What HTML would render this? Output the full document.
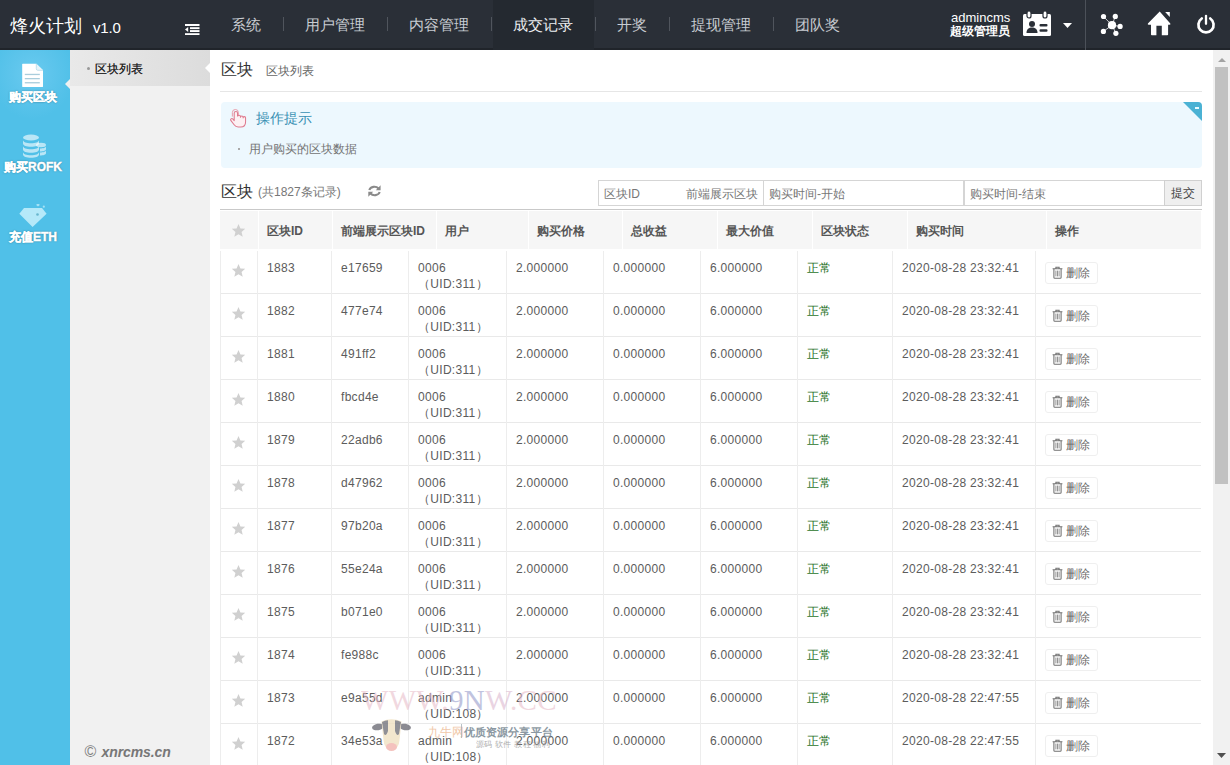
<!DOCTYPE html>
<html><head><meta charset="utf-8">
<style>
*{margin:0;padding:0;box-sizing:border-box}
html,body{width:1230px;height:765px;overflow:hidden;background:#fff;font-family:"Liberation Sans",sans-serif;}
.abs{position:absolute}
#top{position:absolute;left:0;top:0;width:1230px;height:50px;background:#2a2f37;}
#logo{position:absolute;left:10px;top:14.5px;color:#fff;font-size:18px;line-height:22px;white-space:nowrap}
#logo .v{font-size:15px;margin-left:11px;position:relative;top:1px;letter-spacing:-0.2px}
.nav{position:absolute;top:15px;color:#c8ccd2;font-size:15px;line-height:20px;white-space:nowrap}
.sep{position:absolute;top:17px;width:1px;height:14px;background:#50555d}
#act{position:absolute;left:493px;top:0;width:101px;height:50px;background:#242930}
#side1{position:absolute;left:0;top:50px;width:70px;height:715px;background:radial-gradient(ellipse 42px 45px at 32px 24px,#6acbef 0%,#5ec5ec 45%,#50c0e8 100%)}
.s1t{position:absolute;left:-2px;width:70px;text-align:center;color:#fff;font-size:12px;font-weight:bold;line-height:14px;-webkit-text-stroke:0.4px #fff;text-shadow:0 0 2px rgba(0,0,0,.5)}
#side2{position:absolute;left:70px;top:50px;width:140px;height:715px;background:#f1f1f1}
#s2act{position:absolute;left:0;top:0;width:140px;height:35.5px;background:linear-gradient(90deg,#e9e9e9,#dcdcdc)}
#main{position:absolute;left:210px;top:50px;width:1003px;height:715px;background:#fff}
.t16{font-size:16px;color:#333;line-height:20px;white-space:nowrap}
.t12{font-size:12px;color:#666;line-height:16px;white-space:nowrap}
#hr{position:absolute;left:220px;top:91px;width:982px;height:1px;background:#e6e6e6}
#tip{position:absolute;left:221px;top:102px;width:981px;height:66px;background:#edf8fe;border-radius:4px;overflow:hidden}
#tipc{position:absolute;right:0;top:0;width:0;height:0;border-top:19px solid #4bb2d4;border-left:19px solid transparent}
.inp{position:absolute;top:179.5px;height:26.5px;border:1px solid #d5d5d5;background:#fff;font-size:12px;color:#777;line-height:26px;padding-left:5px;white-space:nowrap;overflow:hidden}
#btn{position:absolute;left:1164px;top:180px;width:38px;height:26px;border:1px solid #d0d0d0;background:#efefef;font-size:12px;color:#444;line-height:24px;text-align:center}
#tbl{position:absolute;left:220px;top:208px;width:981px;height:557px;}
#tline{position:absolute;left:220px;top:209px;width:982px;height:1px;background:#c9c9c9}
.thead{position:absolute;left:0;top:3px;width:981px;height:38px;background:#f6f6f6}
.hc{position:absolute;top:0;height:38px;line-height:40px;padding-left:8px;font-size:12px;font-weight:bold;color:#555;border-left:1px solid #fff;white-space:nowrap}
.hc.c0{border-left:none;padding-left:11px;padding-top:0}
.hc.c0 svg{vertical-align:middle;margin-top:-3px}
.tbody{position:absolute;left:0;top:43px;width:981px;height:520px}
.row{position:absolute;left:0;width:981px;height:43px;border-bottom:1px solid #e9e9e9}
.bc{position:absolute;top:0;height:43px;padding:9px 0 0 9px;letter-spacing:0.3px;font-size:12px;color:#5c5c5c;line-height:16px;border-left:1px solid #ededed;white-space:nowrap}
.bc.c0{border-left:1px solid #ededed;padding:12px 0 0 10px}
.uid{display:inline-block;margin-left:0px}
.ok{color:#2a742a;letter-spacing:0}
.del{position:absolute;left:9px;top:11px;letter-spacing:0;width:53px;height:22px;border:1px solid #efefef;border-radius:3px;font-size:12px;color:#6a6a6a;line-height:20px;padding-left:6px}
.del svg{vertical-align:middle;margin-top:-2px;margin-right:3px}
#sb{position:absolute;left:1213px;top:50px;width:17px;height:715px;background:#f1f1f1}
#thumb{position:absolute;left:2px;top:17px;width:13px;height:417px;background:#c1c1c1}
</style></head><body>
<div id="top">
  <div class="abs" style="left:0;top:48px;width:1230px;height:2px;background:#20242a"></div>
  <div id="logo">烽火计划<span class="v">v1.0</span></div>
  <svg class="abs" style="left:185px;top:24px" width="15" height="11" viewBox="0 0 15 11"><rect x="0" y="0" width="14.5" height="2" fill="#fff"/><rect x="5" y="3.2" width="9.5" height="1.9" fill="#fff"/><rect x="5" y="6.1" width="9.5" height="1.9" fill="#fff"/><rect x="0" y="9.2" width="14.5" height="1.9" fill="#fff"/><path d="M0 5.5l3.2-2.6v5.2z" fill="#fff"/></svg>
  <div id="act"></div>
  <div class="nav" style="left:231px">系统</div><div class="sep" style="left:283px"></div>
  <div class="nav" style="left:305px">用户管理</div><div class="sep" style="left:387px"></div>
  <div class="nav" style="left:409px">内容管理</div><div class="sep" style="left:491px"></div>
  <div class="nav" style="left:513px;color:#eceef0">成交记录</div><div class="sep" style="left:595px"></div>
  <div class="nav" style="left:617px">开奖</div><div class="sep" style="left:669px"></div>
  <div class="nav" style="left:691px">提现管理</div><div class="sep" style="left:773px"></div>
  <div class="nav" style="left:795px">团队奖</div>
  <div class="abs" style="left:951px;top:10px;color:#fff;font-size:13px;line-height:15px">admincms</div>
  <div class="abs" style="left:950px;top:23px;color:#fff;font-size:12px;font-weight:bold;line-height:16px">超级管理员</div>
  <svg class="abs" style="left:1022px;top:10px" width="30" height="27" viewBox="0 0 30 27">
    <rect x="1" y="4" width="28" height="22" rx="1.5" fill="#fff"/>
    <rect x="5" y="1" width="4" height="7" rx="2" fill="#fff" stroke="#2a2f37" stroke-width="1.2"/>
    <rect x="21" y="1" width="4" height="7" rx="2" fill="#fff" stroke="#2a2f37" stroke-width="1.2"/>
    <circle cx="10" cy="14" r="3" fill="#2a2f37"/>
    <path d="M4.5 23c0-4 2.5-5.5 5.5-5.5s5.5 1.5 5.5 5.5z" fill="#2a2f37"/>
    <rect x="17.5" y="14" width="8" height="2.4" rx="1" fill="#2a2f37"/>
    <rect x="17.5" y="19.3" width="8" height="2.4" rx="1" fill="#2a2f37"/>
  </svg>
  <svg class="abs" style="left:1063px;top:23px" width="9" height="5" viewBox="0 0 9 5"><path d="M0 0h9L4.5 5z" fill="#fff"/></svg>
  <div class="abs" style="left:1085px;top:0;width:1px;height:50px;background:#4c5159"></div>
  <svg class="abs" style="left:1095px;top:8px" width="32" height="32" viewBox="0 0 32 32">
    <g stroke="#fff" stroke-width="0.9" opacity="0.85"><line x1="17" y1="17.2" x2="8.5" y2="8.5"/><line x1="17" y1="17.2" x2="20.3" y2="8.4"/><line x1="17" y1="17.2" x2="25.1" y2="18.4"/><line x1="17" y1="17.2" x2="8.4" y2="23.4"/><line x1="17" y1="17.2" x2="20.9" y2="25.3"/></g>
    <g fill="#fff"><circle cx="17" cy="17.2" r="4.1"/><circle cx="8.5" cy="8.5" r="2.6"/><circle cx="20.3" cy="8.4" r="2.6"/><circle cx="25.1" cy="18.4" r="2.6"/><circle cx="8.4" cy="23.4" r="2.6"/><circle cx="20.9" cy="25.3" r="2.6"/></g>
  </svg>
  <svg class="abs" style="left:1143px;top:6px" width="32" height="32" viewBox="0 0 32 32">
    <path d="M16.7 5.6L4.9 17.4Q4.3 18.8 5.8 18.8H8V28.5Q8 29.3 8.8 29.3H13.4V19.7H18.8V29.3H24.3Q25.1 29.3 25.1 28.5V18.8H26.4Q27.9 18.8 27.3 17.4Z" fill="#fff"/>
    <path d="M22.2 5.9H26.8V11.1z" fill="#fff"/>
  </svg>
  <svg class="abs" style="left:1195px;top:13px" width="23" height="23" viewBox="0 0 23 23">
    <path d="M6.75 5.5A7.6 7.6 0 1 0 15.25 5.5" fill="none" stroke="#fff" stroke-width="2.7" stroke-linecap="round"/>
    <line x1="11" y1="2.85" x2="11" y2="10.85" stroke="#fff" stroke-width="2.3" stroke-linecap="round"/>
  </svg>
</div>

<div id="side1">
  <svg class="abs" style="left:22px;top:13px" width="22" height="25" viewBox="0 0 22 25"><path d="M0.2 1.2Q0.2 0.8 0.6 0.8H14.3L21 7.3V23.6Q21 24 20.6 24H0.6Q0.2 24 0.2 23.6z" fill="#fff"/><path d="M14.3 0.8V5.8Q14.3 7.3 15.8 7.3H21" fill="#e6f5fb" stroke="#b5d9e8" stroke-width="0.8"/><g fill="#a9cddc"><rect x="2.8" y="10.8" width="15" height="1.3"/><rect x="2.8" y="15" width="15" height="1.3"/><rect x="2.8" y="19.1" width="15" height="1.3"/></g></svg>
  <div class="s1t" style="top:39.5px">购买区块</div>
  <svg class="abs" style="left:65px;top:29px" width="5" height="10" viewBox="0 0 5 10"><path d="M5 0v10L0 5z" fill="#f0f0f0"/></svg>
  <svg class="abs" style="left:22px;top:84px" width="25" height="24" viewBox="0 0 25 24" fill="rgba(255,255,255,.6)"><ellipse cx="9" cy="3.5" rx="8" ry="3"/><path d="M1 6c0 2 3.5 3.3 8 3.3s8-1.3 8-3.3v3.5c0 2-3.5 3.3-8 3.3S1 11.5 1 9.5z"/><path d="M1 12c0 2 3.5 3.3 8 3.3s8-1.3 8-3.3v3.5c0 2-3.5 3.3-8 3.3S1 17.5 1 15.5z"/><path d="M1 18c0 2 3.5 3.3 8 3.3s8-1.3 8-3.3v2.5c0 2-3.5 3.3-8 3.3S1 22.5 1 20.5z"/><ellipse cx="19" cy="11" rx="5" ry="2.2"/><path d="M18 14.5c3 0 6-.8 6-2.2v3c0 1.5-3 2.2-6 2.2zM18 18.5c3 0 6-.8 6-2.2v3c0 1.5-3 2.2-6 2.2z"/></svg>
  <div class="s1t" style="top:110px">购买ROFK</div>
  <svg class="abs" style="left:19px;top:154px" width="28" height="25" viewBox="0 0 28 25"><path d="M5 4h18l4.6 5.8L13.6 23 0.3 9.8z" fill="rgba(220,248,255,.72)"/><circle cx="19" cy="0.8" r="1.5" fill="rgba(220,248,255,.6)"/><circle cx="24.8" cy="2.7" r="1.1" fill="rgba(220,248,255,.6)"/><circle cx="18.5" cy="10.5" r="1.3" fill="rgba(40,140,170,.55)"/></svg>
  <div class="s1t" style="top:180px">充值ETH</div>
</div>

<div id="side2">
  <div id="s2act"></div>
  <div class="abs" style="left:17px;top:17px;width:3px;height:3px;border-radius:50%;background:#999"></div>
  <div class="abs" style="left:25px;top:10.5px;font-size:12px;color:#262626;line-height:16px;text-shadow:0 0 0.4px #444">区块列表</div>
  <svg class="abs" style="left:135px;top:13px" width="5" height="10" viewBox="0 0 5 10"><path d="M5 0v10L0 5z" fill="#fff"/></svg>
  <div class="abs" style="left:14.5px;top:693.5px;font-size:16px;color:#808080;line-height:16px;white-space:nowrap">©</div><div class="abs" style="left:31.5px;top:694px;font-size:14px;color:#777;font-style:italic;font-weight:bold;line-height:16px;letter-spacing:-0.1px;white-space:nowrap">xnrcms.cn</div>
</div>

<div id="main"></div>
<div class="abs t16" style="left:221px;top:60px">区块</div>
<div class="abs t12" style="left:266px;top:63px">区块列表</div>
<div id="hr"></div>
<div id="tip"><div id="tipc"></div>
  <div class="abs" style="left:974px;top:5px;width:4px;height:1.5px;background:#e8fbff"></div>
</div>
<svg class="abs" style="left:223px;top:102.5px" width="30" height="30" viewBox="0 0 30 30"><g transform="translate(13.5 14.5) scale(.88) translate(-13.5 -14.5)"><path d="M8.8 13.5V8.8A3.4 3.4 0 0 1 15.6 8.8V12" fill="none" stroke="#e89aa8" stroke-width="1.1"/><path d="M14.8 13.5a1.6 1.6 0 0 1 3.2 0v.8a1.5 1.5 0 0 1 3 0v.6a1.4 1.4 0 0 1 2.8 0V19.5c0 3.5-2 5.7-5.5 5.7h-3c-2 0-3.3-.8-4.5-2.5L7 17.8a1.4 1.4 0 0 1 2.2-1.7L10.9 18V9.5a1.9 1.9 0 0 1 3.8 0v4" fill="#fdf0f3" stroke="#de7a8e" stroke-width="1.2" stroke-linejoin="round"/></g></svg>
<div class="abs" style="left:256px;top:109px;font-size:14px;color:#3990b3;line-height:18px">操作提示</div>
<div class="abs" style="left:238px;top:148px;width:2px;height:2px;background:#aaa"></div>
<div class="abs t12" style="left:249px;top:141px;color:#737373">用户购买的区块数据</div>

<div class="abs t16" style="left:221px;top:182px">区块</div>
<div class="abs t12" style="left:258px;top:184px;color:#777">(共1827条记录)</div>
<svg class="abs" style="left:368px;top:185px" width="13" height="12" viewBox="0 0 13 12"><path d="M1.3 5A5.3 4.6 0 0 1 10.5 3.5M11.7 7A5.3 4.6 0 0 1 2.5 8.5" fill="none" stroke="#8a8a8a" stroke-width="2.1"/><path d="M12.6 0.3V5.2H7.8z M0.3 11.7V6.8H5.2z" fill="#8a8a8a"/></svg>

<div class="inp" style="left:598px;width:166px">区块ID<span style="position:absolute;left:87px">前端展示区块ID</span><span style="position:absolute;left:159px;top:0;width:7px;height:24px;background:#fff"></span></div>
<div class="inp" style="left:763px;width:201px">购买时间-开始</div>
<div class="inp" style="left:964px;width:201px">购买时间-结束</div>
<div id="btn">提交</div>

<div id="tline"></div>
<div id="tbl">
<div class="thead"><div class="hc c0" style="left:0px;width:38px"><svg width="15" height="15" viewBox="0 0 24 24"><path d="M12 1.5l3.1 7.1 7.6.7-5.8 5 1.8 7.5L12 17.9l-6.7 3.9 1.8-7.5-5.8-5 7.6-.7z" fill="#d0d0d0"/></svg></div><div class="hc" style="left:38px;width:74px">区块ID</div><div class="hc" style="left:112px;width:104px">前端展示区块ID</div><div class="hc" style="left:216px;width:92px">用户</div><div class="hc" style="left:308px;width:94px">购买价格</div><div class="hc" style="left:402px;width:95px">总收益</div><div class="hc" style="left:497px;width:95px">最大价值</div><div class="hc" style="left:592px;width:95px">区块状态</div><div class="hc" style="left:687px;width:139px">购买时间</div><div class="hc" style="left:826px;width:155px">操作</div></div>
<div class="tbody"><div class="row" style="top:0px"><div class="bc c0" style="left:0px;width:37px"><svg width="15" height="15" viewBox="0 0 24 24"><path d="M12 1.5l3.1 7.1 7.6.7-5.8 5 1.8 7.5L12 17.9l-6.7 3.9 1.8-7.5-5.8-5 7.6-.7z" fill="#d0d0d0"/></svg></div><div class="bc" style="left:37px;width:74px">1883</div><div class="bc" style="left:111px;width:77px">e17659</div><div class="bc" style="left:188px;width:98px">0006<br><span class="uid">（UID:311）</span></div><div class="bc" style="left:286px;width:97px">2.000000</div><div class="bc" style="left:383px;width:97px">0.000000</div><div class="bc" style="left:480px;width:97px">6.000000</div><div class="bc" style="left:577px;width:95px"><span class="ok">正常</span></div><div class="bc" style="left:672px;width:143px">2020-08-28 23:32:41</div><div class="bc" style="left:815px;width:166px"><span class="del"><svg width="11" height="13" viewBox="0 0 11 13"><path d="M0.6 2.8h9.8M3.9 2.8V1.3h3.2v1.5M1.9 2.8v8.6q0 .9.9.9h5.4q.9 0 .9-.9V2.8" fill="none" stroke="#707070" stroke-width="1.05"/><path d="M3.9 4.6v5.8M5.5 4.6v5.8M7.1 4.6v5.8" stroke="#707070" stroke-width="0.75"/></svg><span class="dt">删除</span></span></div></div><div class="row" style="top:43px"><div class="bc c0" style="left:0px;width:37px"><svg width="15" height="15" viewBox="0 0 24 24"><path d="M12 1.5l3.1 7.1 7.6.7-5.8 5 1.8 7.5L12 17.9l-6.7 3.9 1.8-7.5-5.8-5 7.6-.7z" fill="#d0d0d0"/></svg></div><div class="bc" style="left:37px;width:74px">1882</div><div class="bc" style="left:111px;width:77px">477e74</div><div class="bc" style="left:188px;width:98px">0006<br><span class="uid">（UID:311）</span></div><div class="bc" style="left:286px;width:97px">2.000000</div><div class="bc" style="left:383px;width:97px">0.000000</div><div class="bc" style="left:480px;width:97px">6.000000</div><div class="bc" style="left:577px;width:95px"><span class="ok">正常</span></div><div class="bc" style="left:672px;width:143px">2020-08-28 23:32:41</div><div class="bc" style="left:815px;width:166px"><span class="del"><svg width="11" height="13" viewBox="0 0 11 13"><path d="M0.6 2.8h9.8M3.9 2.8V1.3h3.2v1.5M1.9 2.8v8.6q0 .9.9.9h5.4q.9 0 .9-.9V2.8" fill="none" stroke="#707070" stroke-width="1.05"/><path d="M3.9 4.6v5.8M5.5 4.6v5.8M7.1 4.6v5.8" stroke="#707070" stroke-width="0.75"/></svg><span class="dt">删除</span></span></div></div><div class="row" style="top:86px"><div class="bc c0" style="left:0px;width:37px"><svg width="15" height="15" viewBox="0 0 24 24"><path d="M12 1.5l3.1 7.1 7.6.7-5.8 5 1.8 7.5L12 17.9l-6.7 3.9 1.8-7.5-5.8-5 7.6-.7z" fill="#d0d0d0"/></svg></div><div class="bc" style="left:37px;width:74px">1881</div><div class="bc" style="left:111px;width:77px">491ff2</div><div class="bc" style="left:188px;width:98px">0006<br><span class="uid">（UID:311）</span></div><div class="bc" style="left:286px;width:97px">2.000000</div><div class="bc" style="left:383px;width:97px">0.000000</div><div class="bc" style="left:480px;width:97px">6.000000</div><div class="bc" style="left:577px;width:95px"><span class="ok">正常</span></div><div class="bc" style="left:672px;width:143px">2020-08-28 23:32:41</div><div class="bc" style="left:815px;width:166px"><span class="del"><svg width="11" height="13" viewBox="0 0 11 13"><path d="M0.6 2.8h9.8M3.9 2.8V1.3h3.2v1.5M1.9 2.8v8.6q0 .9.9.9h5.4q.9 0 .9-.9V2.8" fill="none" stroke="#707070" stroke-width="1.05"/><path d="M3.9 4.6v5.8M5.5 4.6v5.8M7.1 4.6v5.8" stroke="#707070" stroke-width="0.75"/></svg><span class="dt">删除</span></span></div></div><div class="row" style="top:129px"><div class="bc c0" style="left:0px;width:37px"><svg width="15" height="15" viewBox="0 0 24 24"><path d="M12 1.5l3.1 7.1 7.6.7-5.8 5 1.8 7.5L12 17.9l-6.7 3.9 1.8-7.5-5.8-5 7.6-.7z" fill="#d0d0d0"/></svg></div><div class="bc" style="left:37px;width:74px">1880</div><div class="bc" style="left:111px;width:77px">fbcd4e</div><div class="bc" style="left:188px;width:98px">0006<br><span class="uid">（UID:311）</span></div><div class="bc" style="left:286px;width:97px">2.000000</div><div class="bc" style="left:383px;width:97px">0.000000</div><div class="bc" style="left:480px;width:97px">6.000000</div><div class="bc" style="left:577px;width:95px"><span class="ok">正常</span></div><div class="bc" style="left:672px;width:143px">2020-08-28 23:32:41</div><div class="bc" style="left:815px;width:166px"><span class="del"><svg width="11" height="13" viewBox="0 0 11 13"><path d="M0.6 2.8h9.8M3.9 2.8V1.3h3.2v1.5M1.9 2.8v8.6q0 .9.9.9h5.4q.9 0 .9-.9V2.8" fill="none" stroke="#707070" stroke-width="1.05"/><path d="M3.9 4.6v5.8M5.5 4.6v5.8M7.1 4.6v5.8" stroke="#707070" stroke-width="0.75"/></svg><span class="dt">删除</span></span></div></div><div class="row" style="top:172px"><div class="bc c0" style="left:0px;width:37px"><svg width="15" height="15" viewBox="0 0 24 24"><path d="M12 1.5l3.1 7.1 7.6.7-5.8 5 1.8 7.5L12 17.9l-6.7 3.9 1.8-7.5-5.8-5 7.6-.7z" fill="#d0d0d0"/></svg></div><div class="bc" style="left:37px;width:74px">1879</div><div class="bc" style="left:111px;width:77px">22adb6</div><div class="bc" style="left:188px;width:98px">0006<br><span class="uid">（UID:311）</span></div><div class="bc" style="left:286px;width:97px">2.000000</div><div class="bc" style="left:383px;width:97px">0.000000</div><div class="bc" style="left:480px;width:97px">6.000000</div><div class="bc" style="left:577px;width:95px"><span class="ok">正常</span></div><div class="bc" style="left:672px;width:143px">2020-08-28 23:32:41</div><div class="bc" style="left:815px;width:166px"><span class="del"><svg width="11" height="13" viewBox="0 0 11 13"><path d="M0.6 2.8h9.8M3.9 2.8V1.3h3.2v1.5M1.9 2.8v8.6q0 .9.9.9h5.4q.9 0 .9-.9V2.8" fill="none" stroke="#707070" stroke-width="1.05"/><path d="M3.9 4.6v5.8M5.5 4.6v5.8M7.1 4.6v5.8" stroke="#707070" stroke-width="0.75"/></svg><span class="dt">删除</span></span></div></div><div class="row" style="top:215px"><div class="bc c0" style="left:0px;width:37px"><svg width="15" height="15" viewBox="0 0 24 24"><path d="M12 1.5l3.1 7.1 7.6.7-5.8 5 1.8 7.5L12 17.9l-6.7 3.9 1.8-7.5-5.8-5 7.6-.7z" fill="#d0d0d0"/></svg></div><div class="bc" style="left:37px;width:74px">1878</div><div class="bc" style="left:111px;width:77px">d47962</div><div class="bc" style="left:188px;width:98px">0006<br><span class="uid">（UID:311）</span></div><div class="bc" style="left:286px;width:97px">2.000000</div><div class="bc" style="left:383px;width:97px">0.000000</div><div class="bc" style="left:480px;width:97px">6.000000</div><div class="bc" style="left:577px;width:95px"><span class="ok">正常</span></div><div class="bc" style="left:672px;width:143px">2020-08-28 23:32:41</div><div class="bc" style="left:815px;width:166px"><span class="del"><svg width="11" height="13" viewBox="0 0 11 13"><path d="M0.6 2.8h9.8M3.9 2.8V1.3h3.2v1.5M1.9 2.8v8.6q0 .9.9.9h5.4q.9 0 .9-.9V2.8" fill="none" stroke="#707070" stroke-width="1.05"/><path d="M3.9 4.6v5.8M5.5 4.6v5.8M7.1 4.6v5.8" stroke="#707070" stroke-width="0.75"/></svg><span class="dt">删除</span></span></div></div><div class="row" style="top:258px"><div class="bc c0" style="left:0px;width:37px"><svg width="15" height="15" viewBox="0 0 24 24"><path d="M12 1.5l3.1 7.1 7.6.7-5.8 5 1.8 7.5L12 17.9l-6.7 3.9 1.8-7.5-5.8-5 7.6-.7z" fill="#d0d0d0"/></svg></div><div class="bc" style="left:37px;width:74px">1877</div><div class="bc" style="left:111px;width:77px">97b20a</div><div class="bc" style="left:188px;width:98px">0006<br><span class="uid">（UID:311）</span></div><div class="bc" style="left:286px;width:97px">2.000000</div><div class="bc" style="left:383px;width:97px">0.000000</div><div class="bc" style="left:480px;width:97px">6.000000</div><div class="bc" style="left:577px;width:95px"><span class="ok">正常</span></div><div class="bc" style="left:672px;width:143px">2020-08-28 23:32:41</div><div class="bc" style="left:815px;width:166px"><span class="del"><svg width="11" height="13" viewBox="0 0 11 13"><path d="M0.6 2.8h9.8M3.9 2.8V1.3h3.2v1.5M1.9 2.8v8.6q0 .9.9.9h5.4q.9 0 .9-.9V2.8" fill="none" stroke="#707070" stroke-width="1.05"/><path d="M3.9 4.6v5.8M5.5 4.6v5.8M7.1 4.6v5.8" stroke="#707070" stroke-width="0.75"/></svg><span class="dt">删除</span></span></div></div><div class="row" style="top:301px"><div class="bc c0" style="left:0px;width:37px"><svg width="15" height="15" viewBox="0 0 24 24"><path d="M12 1.5l3.1 7.1 7.6.7-5.8 5 1.8 7.5L12 17.9l-6.7 3.9 1.8-7.5-5.8-5 7.6-.7z" fill="#d0d0d0"/></svg></div><div class="bc" style="left:37px;width:74px">1876</div><div class="bc" style="left:111px;width:77px">55e24a</div><div class="bc" style="left:188px;width:98px">0006<br><span class="uid">（UID:311）</span></div><div class="bc" style="left:286px;width:97px">2.000000</div><div class="bc" style="left:383px;width:97px">0.000000</div><div class="bc" style="left:480px;width:97px">6.000000</div><div class="bc" style="left:577px;width:95px"><span class="ok">正常</span></div><div class="bc" style="left:672px;width:143px">2020-08-28 23:32:41</div><div class="bc" style="left:815px;width:166px"><span class="del"><svg width="11" height="13" viewBox="0 0 11 13"><path d="M0.6 2.8h9.8M3.9 2.8V1.3h3.2v1.5M1.9 2.8v8.6q0 .9.9.9h5.4q.9 0 .9-.9V2.8" fill="none" stroke="#707070" stroke-width="1.05"/><path d="M3.9 4.6v5.8M5.5 4.6v5.8M7.1 4.6v5.8" stroke="#707070" stroke-width="0.75"/></svg><span class="dt">删除</span></span></div></div><div class="row" style="top:344px"><div class="bc c0" style="left:0px;width:37px"><svg width="15" height="15" viewBox="0 0 24 24"><path d="M12 1.5l3.1 7.1 7.6.7-5.8 5 1.8 7.5L12 17.9l-6.7 3.9 1.8-7.5-5.8-5 7.6-.7z" fill="#d0d0d0"/></svg></div><div class="bc" style="left:37px;width:74px">1875</div><div class="bc" style="left:111px;width:77px">b071e0</div><div class="bc" style="left:188px;width:98px">0006<br><span class="uid">（UID:311）</span></div><div class="bc" style="left:286px;width:97px">2.000000</div><div class="bc" style="left:383px;width:97px">0.000000</div><div class="bc" style="left:480px;width:97px">6.000000</div><div class="bc" style="left:577px;width:95px"><span class="ok">正常</span></div><div class="bc" style="left:672px;width:143px">2020-08-28 23:32:41</div><div class="bc" style="left:815px;width:166px"><span class="del"><svg width="11" height="13" viewBox="0 0 11 13"><path d="M0.6 2.8h9.8M3.9 2.8V1.3h3.2v1.5M1.9 2.8v8.6q0 .9.9.9h5.4q.9 0 .9-.9V2.8" fill="none" stroke="#707070" stroke-width="1.05"/><path d="M3.9 4.6v5.8M5.5 4.6v5.8M7.1 4.6v5.8" stroke="#707070" stroke-width="0.75"/></svg><span class="dt">删除</span></span></div></div><div class="row" style="top:387px"><div class="bc c0" style="left:0px;width:37px"><svg width="15" height="15" viewBox="0 0 24 24"><path d="M12 1.5l3.1 7.1 7.6.7-5.8 5 1.8 7.5L12 17.9l-6.7 3.9 1.8-7.5-5.8-5 7.6-.7z" fill="#d0d0d0"/></svg></div><div class="bc" style="left:37px;width:74px">1874</div><div class="bc" style="left:111px;width:77px">fe988c</div><div class="bc" style="left:188px;width:98px">0006<br><span class="uid">（UID:311）</span></div><div class="bc" style="left:286px;width:97px">2.000000</div><div class="bc" style="left:383px;width:97px">0.000000</div><div class="bc" style="left:480px;width:97px">6.000000</div><div class="bc" style="left:577px;width:95px"><span class="ok">正常</span></div><div class="bc" style="left:672px;width:143px">2020-08-28 23:32:41</div><div class="bc" style="left:815px;width:166px"><span class="del"><svg width="11" height="13" viewBox="0 0 11 13"><path d="M0.6 2.8h9.8M3.9 2.8V1.3h3.2v1.5M1.9 2.8v8.6q0 .9.9.9h5.4q.9 0 .9-.9V2.8" fill="none" stroke="#707070" stroke-width="1.05"/><path d="M3.9 4.6v5.8M5.5 4.6v5.8M7.1 4.6v5.8" stroke="#707070" stroke-width="0.75"/></svg><span class="dt">删除</span></span></div></div><div class="row" style="top:430px"><div class="bc c0" style="left:0px;width:37px"><svg width="15" height="15" viewBox="0 0 24 24"><path d="M12 1.5l3.1 7.1 7.6.7-5.8 5 1.8 7.5L12 17.9l-6.7 3.9 1.8-7.5-5.8-5 7.6-.7z" fill="#d0d0d0"/></svg></div><div class="bc" style="left:37px;width:74px">1873</div><div class="bc" style="left:111px;width:77px">e9a55d</div><div class="bc" style="left:188px;width:98px">admin<br><span class="uid">（UID:108）</span></div><div class="bc" style="left:286px;width:97px">2.000000</div><div class="bc" style="left:383px;width:97px">0.000000</div><div class="bc" style="left:480px;width:97px">6.000000</div><div class="bc" style="left:577px;width:95px"><span class="ok">正常</span></div><div class="bc" style="left:672px;width:143px">2020-08-28 22:47:55</div><div class="bc" style="left:815px;width:166px"><span class="del"><svg width="11" height="13" viewBox="0 0 11 13"><path d="M0.6 2.8h9.8M3.9 2.8V1.3h3.2v1.5M1.9 2.8v8.6q0 .9.9.9h5.4q.9 0 .9-.9V2.8" fill="none" stroke="#707070" stroke-width="1.05"/><path d="M3.9 4.6v5.8M5.5 4.6v5.8M7.1 4.6v5.8" stroke="#707070" stroke-width="0.75"/></svg><span class="dt">删除</span></span></div></div><div class="row" style="top:473px"><div class="bc c0" style="left:0px;width:37px"><svg width="15" height="15" viewBox="0 0 24 24"><path d="M12 1.5l3.1 7.1 7.6.7-5.8 5 1.8 7.5L12 17.9l-6.7 3.9 1.8-7.5-5.8-5 7.6-.7z" fill="#d0d0d0"/></svg></div><div class="bc" style="left:37px;width:74px">1872</div><div class="bc" style="left:111px;width:77px">34e53a</div><div class="bc" style="left:188px;width:98px">admin<br><span class="uid">（UID:108）</span></div><div class="bc" style="left:286px;width:97px">2.000000</div><div class="bc" style="left:383px;width:97px">0.000000</div><div class="bc" style="left:480px;width:97px">6.000000</div><div class="bc" style="left:577px;width:95px"><span class="ok">正常</span></div><div class="bc" style="left:672px;width:143px">2020-08-28 22:47:55</div><div class="bc" style="left:815px;width:166px"><span class="del"><svg width="11" height="13" viewBox="0 0 11 13"><path d="M0.6 2.8h9.8M3.9 2.8V1.3h3.2v1.5M1.9 2.8v8.6q0 .9.9.9h5.4q.9 0 .9-.9V2.8" fill="none" stroke="#707070" stroke-width="1.05"/><path d="M3.9 4.6v5.8M5.5 4.6v5.8M7.1 4.6v5.8" stroke="#707070" stroke-width="0.75"/></svg><span class="dt">删除</span></span></div></div></div>
</div>


<div class="abs" style="left:361px;top:684px;font-family:'Liberation Serif',serif;font-size:29px;line-height:32px;white-space:nowrap;letter-spacing:0.3px;opacity:.55"><span style="color:#e7b9c6">WWW.</span><span style="color:#8e93c6">9N</span><span style="color:#d8b2cc">W</span><span style="color:#e7b9c6">.CC</span></div>
<svg class="abs" style="left:372px;top:719px;opacity:.8" width="39" height="34" viewBox="0 0 39 34">
  <ellipse cx="6" cy="8" rx="6" ry="3.2" fill="#6f6f78" transform="rotate(-10 6 8)"/>
  <ellipse cx="33" cy="8" rx="6" ry="3.2" fill="#6f6f78" transform="rotate(10 33 8)"/>
  <path d="M9.5 2.5Q19.5 -2 29.5 2.5L27.5 21Q27 30 19.5 31Q12 30 11.5 21z" fill="#f1e2c3"/>
  <path d="M10 3Q13 1.5 16 1.3L16 12Q14 18 12 15z" fill="#75757d"/>
  <path d="M29 3Q26 1.5 23 1.3L23 12Q25 18 27 15z" fill="#75757d"/>
  <ellipse cx="19.5" cy="28" rx="5.5" ry="4" fill="#f2b4ae"/>
</svg>
<div class="abs" style="left:428px;top:724px;font-size:12px;line-height:16px;color:#efbf9c;white-space:nowrap;opacity:.85">九牛网</div>
<div class="abs" style="left:461px;top:724px;width:1px;height:14px;background:#9aa6b0;opacity:.7"></div>
<div class="abs" style="left:464px;top:724px;font-size:11px;line-height:16px;color:#6f7f8c;font-weight:bold;white-space:nowrap;opacity:.8;letter-spacing:0.1px">优质资源分享平台</div>
<div class="abs" style="left:476px;top:740px;font-size:8px;line-height:10px;color:#9a9a9a;white-space:nowrap;opacity:.8;letter-spacing:0.3px">源码 软件 教程 福利</div>
<div id="sb"><div id="thumb"></div>
<svg class="abs" style="left:4.5px;top:7.5px" width="8" height="4"><path d="M0 4h8L4 0z" fill="#a3a3a3"/></svg>
<svg class="abs" style="left:4px;top:703px" width="9" height="5"><path d="M0 0h9L4.5 5z" fill="#505050"/></svg>
</div>
</body></html>
